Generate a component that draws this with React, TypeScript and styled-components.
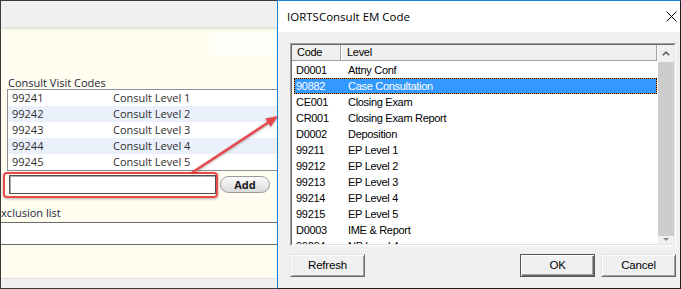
import React from 'react';
import styled, { createGlobalStyle } from 'styled-components';

const GlobalStyle = createGlobalStyle`
  html, body { margin: 0; padding: 0; background: #ffffff; }
  body { width: 681px; height: 289px; overflow: hidden; }
  *, *::before, *::after { box-sizing: border-box; }
`;

const Frame = styled.div`
  position: relative;
  width: 681px;
  height: 289px;
  display: flex;
  overflow: hidden;
`;

/* ---------- left (background) window ---------- */

const LeftPanel = styled.section`
  width: 277px;
  height: 289px;
  flex-shrink: 0;
  border: 1px solid #3a3a3a;
  border-right: none;
  background: #fffcf0;
  display: flex;
  flex-direction: column;
  overflow: hidden;
  font-family: "Open Sans", "Noto Sans", sans-serif;
  font-size: 11px;
`;

const Toolbar = styled.div`
  height: 26px;
  flex-shrink: 0;
  background: #f0f0f0;
  box-shadow: 0 1px 3px rgba(0, 0, 0, 0.2);
  position: relative;
  z-index: 1;
`;

const FadedRow = styled.div`
  display: flex;
  justify-content: flex-end;
  margin-top: 6px;
  height: 22px;
  flex-shrink: 0;
`;

const FadedBlock = styled.div`
  width: 67px;
  background: #fffef8;
`;

const SectionLabel = styled.div<{ $shift?: number }>`
  height: 13px;
  line-height: 13px;
  margin-top: ${p => (p.$mt ?? 0)}px;
  margin-left: ${p => p.$shift ?? 7}px;
  color: #1b2740;
  white-space: nowrap;
  flex-shrink: 0;
` as any;

const CodeList = styled.div`
  margin-left: 6px;
  width: 330px;
  flex-shrink: 0;
  border: 1px solid #8e8f90;
  background: #ffffff;
`;

const CodeRow = styled.div<{ $alt: boolean }>`
  display: flex;
  height: 16px;
  line-height: 16px;
  color: #2e2e2e;
  background: ${p => (p.$alt ? '#eaf1fb' : '#ffffff')};
`;

const CodeCell = styled.span`
  width: 105px;
  padding-left: 4px;
  flex-shrink: 0;
`;

const LevelCell = styled.span`
  white-space: nowrap;
`;

const AddRow = styled.div`
  display: flex;
  align-items: center;
  margin-top: 4px;
  height: 19px;
  flex-shrink: 0;
  width: 340px;
`;

const HighlightWrap = styled.div`
  position: relative;
  margin-left: 8px;
  &::after {
    content: '';
    position: absolute;
    left: -6px;
    right: -2px;
    top: -3px;
    bottom: -4px;
    border: 2px solid #e8484b;
    border-radius: 4px;
    box-shadow: 0 1px 3px rgba(0, 0, 0, 0.3);
    pointer-events: none;
  }
`;

const TextBox = styled.div`
  width: 207px;
  height: 19px;
  background: #ffffff;
  border: 1px solid #505050;
  box-shadow: inset 1px 1px 0 #a8a8a8;
`;

const PillButton = styled.div<{ $ml: number }>`
  margin-left: ${p => p.$ml}px;
  width: 50px;
  height: 17px;
  flex-shrink: 0;
  border: 1px solid #9a9a9a;
  border-radius: 9px;
  background: linear-gradient(#fbfbfb, #dadada);
  color: #1a1a1a;
  font-weight: 700;
  font-size: 11px;
  line-height: 15px;
  text-align: center;
`;

const ExclusionBox = styled.div`
  margin-top: 3px;
  height: 23px;
  flex-shrink: 0;
  background: #ffffff;
  border-top: 1px solid #6a6a6a;
  border-bottom: 1px solid #6a6a6a;
`;

const Spacer = styled.div`
  flex: 1;
`;

const BottomStrip = styled.div`
  height: 10px;
  flex-shrink: 0;
  background: #f0f0f0;
  border-top: 1px solid #e2e2e2;
`;

/* ---------- dialog ---------- */

const Dialog = styled.section`
  flex: 1;
  height: 289px;
  border-left: 1px solid #1883d7;
  border-top: 1px solid #1883d7;
  border-right: 1px solid #1f1f1f;
  border-bottom: 1px solid #1f1f1f;
  background: #f0f0f0;
  display: flex;
  flex-direction: column;
  font-family: "Liberation Sans", Arial, sans-serif;
  font-size: 11px;
  letter-spacing: -0.3px;
`;

const TitleBar = styled.header`
  height: 31px;
  flex-shrink: 0;
  background: #ffffff;
  display: flex;
  align-items: center;
  justify-content: space-between;
  padding: 0 3px 0 9px;
`;

const Title = styled.span`
  font-family: "Open Sans", "Noto Sans", sans-serif;
  font-size: 11.5px;
  letter-spacing: 0;
  line-height: 31px;
  color: #000000;
`;

const DialogBody = styled.div`
  flex: 1;
  display: flex;
  flex-direction: column;
  padding: 11px 4px 0 12px;
`;

const ListOuter = styled.div`
  height: 203px;
  border: 1px solid;
  border-color: #a0a0a0 #ffffff #ffffff #a0a0a0;
`;

const ListInner = styled.div`
  height: 100%;
  border: 1px solid;
  border-color: #696969 #e3e3e3 #e3e3e3 #696969;
  background: #ffffff;
  display: flex;
  overflow: hidden;
`;

const RowsArea = styled.div`
  flex: 1;
  display: flex;
  flex-direction: column;
  overflow: hidden;
`;

const Header = styled.div`
  display: flex;
  height: 16px;
  flex-shrink: 0;
  background: #f0f0f0;
  border-bottom: 1px solid #a0a0a0;
  border-right: 1px solid #a0a0a0;
  margin-right: 1px;
  line-height: 15px;
  color: #000000;
`;

const HeaderCell = styled.div<{ $w?: number; $pl: number }>`
  ${p => (p.$w ? `width: ${p.$w}px; flex-shrink: 0; border-right: 1px solid #a0a0a0; box-shadow: 1px 0 0 #ffffff;` : 'flex: 1;')}
  padding-left: ${p => p.$pl}px;
`;

const Rows = styled.div`
  padding-top: 1px;
  display: flex;
  flex-direction: column;
`;

const DialogRow = styled.div<{ $selected: boolean }>`
  display: flex;
  height: 16px;
  flex-shrink: 0;
  margin: 0 1px 0 2px;
  line-height: 14px;
  border: 1px ${p => (p.$selected ? 'dotted #000000' : 'solid transparent')};
  background: ${p =>
    p.$selected
      ? 'linear-gradient(#3399ff, #3399ff) padding-box, #e58a1f border-box'
      : 'transparent'};
  color: ${p => (p.$selected ? '#ffffff' : '#000000')};
  white-space: nowrap;
`;

const DialogCode = styled.span`
  width: 46px;
  padding-left: 1px;
  flex-shrink: 0;
`;

const DialogLevel = styled.span`
  padding-left: 7px;
`;

const ScrollBar = styled.div`
  width: 16px;
  flex-shrink: 0;
  background: #f0f0f0;
  display: flex;
  flex-direction: column;
`;

const ScrollButton = styled.div<{ $h?: number }>`
  ${p => (p.$h ? `height: ${p.$h}px;` : 'flex: 1; padding-top: 2px;')}
  display: flex;
  align-items: ${p => (p.$h ? 'center' : 'flex-start')};
  justify-content: center;
  flex-shrink: 0;
`;

const Thumb = styled.div`
  height: 174px;
  flex-shrink: 0;
  background: #cdcdcd;
`;

const ButtonRow = styled.div`
  display: flex;
  margin-top: 8px;
  gap: 6px;
`;

const ClassicButton = styled.div<{ $default?: boolean; $push?: boolean }>`
  width: 75px;
  height: 23px;
  background: #f0f0f0;
  text-align: center;
  line-height: 20px;
  color: #000000;
  font-size: 11.5px;
  letter-spacing: -0.2px;
  margin-left: ${p => (p.$push ? 'auto' : '0')};
  border: 1px solid;
  border-color: ${p => (p.$default ? '#555555' : '#e3e3e3 #696969 #696969 #e3e3e3')};
  box-shadow: ${p =>
    p.$default
      ? 'inset 1px 1px 0 #ffffff, inset -1px -1px 0 #696969, inset -2px -2px 0 #a0a0a0'
      : 'inset 1px 1px 0 #ffffff, inset -1px -1px 0 #a0a0a0'};
`;

const ArrowOverlay = styled.svg`
  position: absolute;
  left: 0;
  top: 0;
  pointer-events: none;
  filter: drop-shadow(0 1px 1px rgba(0, 0, 0, 0.3));
`;

const consultCodes = [
  ['99241', 'Consult Level 1'],
  ['99242', 'Consult Level 2'],
  ['99243', 'Consult Level 3'],
  ['99244', 'Consult Level 4'],
  ['99245', 'Consult Level 5'],
];

const emCodes = [
  ['D0001', 'Attny Conf'],
  ['90882', 'Case Consultation'],
  ['CE001', 'Closing Exam'],
  ['CR001', 'Closing Exam Report'],
  ['D0002', 'Deposition'],
  ['99211', 'EP Level 1'],
  ['99212', 'EP Level 2'],
  ['99213', 'EP Level 3'],
  ['99214', 'EP Level 4'],
  ['99215', 'EP Level 5'],
  ['D0003', 'IME & Report'],
  ['99204', 'NP Level 4'],
];

export default function App() {
  return (
    <>
      <GlobalStyle />
      <Frame>
        <LeftPanel>
          <Toolbar />
          <FadedRow>
            <FadedBlock />
          </FadedRow>
          <SectionLabel $mt={21}>Consult Visit Codes</SectionLabel>
          <CodeList>
            {consultCodes.map(([code, level], i) => (
              <CodeRow key={code} $alt={i % 2 === 1}>
                <CodeCell>{code}</CodeCell>
                <LevelCell>{level}</LevelCell>
              </CodeRow>
            ))}
          </CodeList>
          <AddRow>
            <HighlightWrap>
              <TextBox />
            </HighlightWrap>
            <PillButton $ml={4}>Add</PillButton>
            <PillButton $ml={7} />
          </AddRow>
          <SectionLabel $mt={12} $shift={-6}>Exclusion list</SectionLabel>
          <ExclusionBox />
          <Spacer />
          <BottomStrip />
        </LeftPanel>

        <Dialog>
          <TitleBar>
            <Title>IORTSConsult EM Code</Title>
            <svg width="11" height="11" viewBox="0 0 11 11">
              <path d="M0.5 0.5 L10.5 10.5 M10.5 0.5 L0.5 10.5" stroke="#000" strokeWidth="1" fill="none" />
            </svg>
          </TitleBar>
          <DialogBody>
            <ListOuter>
              <ListInner>
                <RowsArea>
                  <Header>
                    <HeaderCell $w={49} $pl={5}>Code</HeaderCell>
                    <HeaderCell $pl={6}>Level</HeaderCell>
                  </Header>
                  <Rows>
                    {emCodes.map(([code, level], i) => (
                      <DialogRow key={code} $selected={i === 1}>
                        <DialogCode>{code}</DialogCode>
                        <DialogLevel>{level}</DialogLevel>
                      </DialogRow>
                    ))}
                  </Rows>
                </RowsArea>
                <ScrollBar>
                  <ScrollButton $h={17}>
                    <svg width="8" height="5" viewBox="0 0 8 5">
                      <path d="M0.8 4.3 L4 1.2 L7.2 4.3" stroke="#606060" strokeWidth="1.6" fill="none" />
                    </svg>
                  </ScrollButton>
                  <Thumb />
                  <ScrollButton>
                    <svg width="6" height="3" viewBox="0 0 6 3">
                      <path d="M0 0 L6 0 L3 3 Z" fill="#8a8a8a" />
                    </svg>
                  </ScrollButton>
                </ScrollBar>
              </ListInner>
            </ListOuter>
            <ButtonRow>
              <ClassicButton>Refresh</ClassicButton>
              <ClassicButton $default $push>OK</ClassicButton>
              <ClassicButton>Cancel</ClassicButton>
            </ButtonRow>
          </DialogBody>
        </Dialog>

        <ArrowOverlay width="681" height="289" viewBox="0 0 681 289">
          <line x1="193" y1="172" x2="269" y2="122" stroke="#e8484b" strokeWidth="2.5" strokeLinecap="round" />
          <polygon points="278,116 265.2,118.4 270.8,126.8" fill="#e8484b" />
        </ArrowOverlay>
      </Frame>
    </>
  );
}
